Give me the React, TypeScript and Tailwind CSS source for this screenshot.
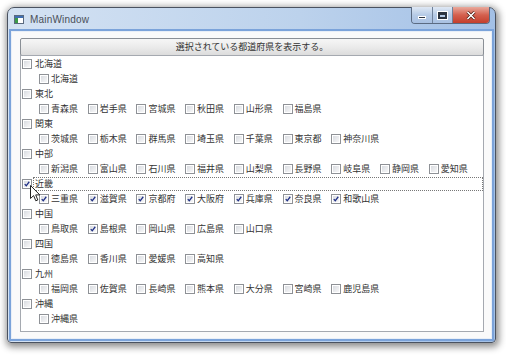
import React from "react";

type Pref = { name: string; checked?: boolean };
type Region = { name: string; checked?: boolean; prefs: Pref[] };

const p = (names: string, checked: string[] = []): Pref[] =>
  names.split(" ").map((n) => ({ name: n, checked: checked.includes(n) }));

const regions: Region[] = [
  { name: "北海道", prefs: p("北海道") },
  { name: "東北", prefs: p("青森県 岩手県 宮城県 秋田県 山形県 福島県") },
  { name: "関東", prefs: p("茨城県 栃木県 群馬県 埼玉県 千葉県 東京都 神奈川県") },
  { name: "中部", prefs: p("新潟県 富山県 石川県 福井県 山梨県 長野県 岐阜県 静岡県 愛知県") },
  {
    name: "近畿",
    checked: true,
    prefs: p("三重県 滋賀県 京都府 大阪府 兵庫県 奈良県 和歌山県", [
      "三重県",
      "滋賀県",
      "京都府",
      "大阪府",
      "兵庫県",
      "奈良県",
      "和歌山県",
    ]),
  },
  { name: "中国", prefs: p("鳥取県 島根県 岡山県 広島県 山口県", ["島根県"]) },
  { name: "四国", prefs: p("徳島県 香川県 愛媛県 高知県") },
  { name: "九州", prefs: p("福岡県 佐賀県 長崎県 熊本県 大分県 宮崎県 鹿児島県") },
  { name: "沖縄", prefs: p("沖縄県") },
];

function Box({ checked }: { checked?: boolean }) {
  return (
    <div className="w-[10px] h-[10px] shrink-0 border border-[#8e9196] bg-white p-px">
      <div className="w-full h-full bg-[linear-gradient(135deg,#d9dce1,#f7f7f8)] flex items-center justify-center">
        {checked && (
          <svg width="8" height="8" viewBox="0 0 8 8">
            <path d="M1 4.2 L3 6.4 L7 1" fill="none" stroke="#1f2f86" strokeWidth="1.7" />
          </svg>
        )}
      </div>
    </div>
  );
}

export default function App() {
  return (
    <div
      className="relative w-[506px] h-[359px] bg-white pl-[7px] pt-[7px] text-[#333]"
      style={{ fontFamily: '"Noto Sans CJK JP", "Noto Sans", sans-serif' }}
    >
      {/* window */}
      <div className="w-[489px] h-[336px] flex flex-col border border-[#4a5260] rounded-t-[7px] rounded-b-[4px] bg-[linear-gradient(to_right,#d4e2f3,#bcd2ec_60%,#a3c0e6)] px-[3px] pb-[3px] shadow-[1px_2px_7px_2px_rgba(0,0,0,0.45)]">
        {/* title bar */}
        <div className="h-[23px] flex items-start">
          <div className="flex items-center h-[20px] pl-[3px] pt-[3px]">
            <svg width="10" height="9" viewBox="0 0 10 9">
              <rect x="0.5" y="0.5" width="9" height="8" fill="#fff" stroke="#5a6a80" />
              <rect x="1" y="1" width="8" height="2" fill="#3f6fb3" />
              <rect x="1" y="3" width="3" height="5" fill="#3c9a4a" />
            </svg>
            <span
              className="ml-[6px] text-[10px] text-[#4a4f58] tracking-[0.2px]"
              style={{ fontFamily: '"Liberation Sans", Arial, sans-serif' }}
            >
              MainWindow
            </span>
          </div>
          <div className="ml-auto mr-[2px] -mt-px flex h-[17px] border border-t-0 border-[#5b6b82] rounded-b-[4px] overflow-hidden">
            <div className="w-[21px] flex items-center justify-center bg-[linear-gradient(#dfe8f4,#b6cbe6_50%,#a9c1e2)] border-r border-[#6f819a]">
              <div className="w-[8px] h-[3px] bg-[#2c3440] border border-white mt-[5px]" />
            </div>
            <div className="w-[20px] flex items-center justify-center bg-[linear-gradient(#dfe8f4,#b6cbe6_50%,#a9c1e2)] border-r border-[#6f819a]">
              <div className="w-[9px] h-[7px] border-2 border-t-[3px] border-[#2c3440] outline outline-1 outline-white" />
            </div>
            <div className="w-[36px] flex items-center justify-center bg-[linear-gradient(#e9a99c,#d4604e_50%,#c43e2c)]">
              <svg width="10" height="9" viewBox="0 0 10 9">
                <path d="M1.5 1 L8.5 8 M8.5 1 L1.5 8" stroke="#4a1a12" strokeWidth="3" />
                <path d="M1.5 1 L8.5 8 M8.5 1 L1.5 8" stroke="#fff" strokeWidth="1.6" />
              </svg>
            </div>
          </div>
        </div>

        {/* client */}
        <div className="flex-1 flex flex-col bg-[#fafafa] border border-[#e9eff7] shadow-[0_0_0_2px_#7ba3da] pl-[8px] pr-[7px] pt-[6px] pb-[6px]">
          <button className="h-[18px] shrink-0 border border-[#8a8f96] rounded-[2px] bg-[linear-gradient(#f6f6f6,#ebebeb_50%,#dcdcdc)] text-[9px] leading-[16px] text-[#333]">
            選択されている都道府県を表示する。
          </button>
          <div className="flex-1 -mt-px border border-[#a5a9b0] bg-white overflow-hidden text-[9px] leading-[15px]">
            {regions.map((r) => (
              <div key={r.name}>
                <div className="h-[15px] flex items-center pl-px">
                  <Box checked={r.checked} />
                  <div
                    className={
                      "ml-px flex-1 h-[14px] flex items-center pl-px border " +
                      (r.checked ? "border-dotted border-[#777]" : "border-transparent")
                    }
                  >
                    {r.name}
                  </div>
                </div>
                <div className="h-[15px] flex items-center pl-[18px]">
                  {r.prefs.map((pr) => (
                    <div key={pr.name} className="flex items-center mr-[9.7px]">
                      <Box checked={pr.checked} />
                      <span className="ml-[2px] whitespace-nowrap">{pr.name}</span>
                    </div>
                  ))}
                </div>
              </div>
            ))}
          </div>
        </div>
      </div>

      {/* mouse pointer */}
      <svg className="absolute left-[30px] top-[185px]" width="11" height="17" viewBox="0 0 11 17">
        <path
          d="M0.5 0.5 L0.5 13.5 L3.6 10.6 L5.8 15.8 L7.8 15 L5.7 9.9 L9.8 9.9 Z"
          fill="#fff"
          stroke="#222"
          strokeWidth="1"
          strokeLinejoin="round"
        />
      </svg>
    </div>
  );
}
